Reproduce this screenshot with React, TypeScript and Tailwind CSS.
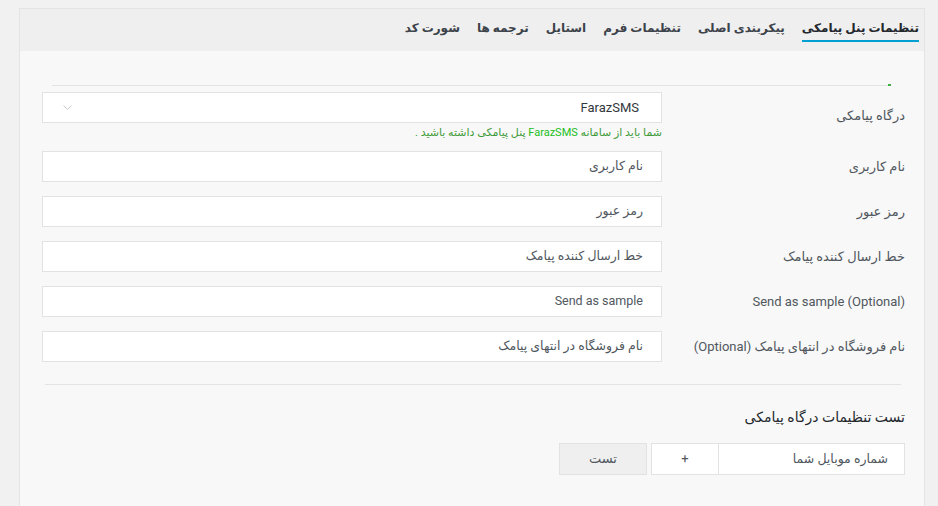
import React from "react";

const tabs = ["تنظیمات پنل پیامکی", "پیکربندی اصلی", "تنظیمات فرم", "استایل", "ترجمه ها", "شورت کد"];

const fields = [
  { label: "نام کاربری", value: "نام کاربری" },
  { label: "رمز عبور", value: "رمز عبور" },
  { label: "خط ارسال کننده پیامک", value: "خط ارسال کننده پیامک" },
  { label: "Send as sample (Optional)", value: "Send as sample" },
  { label: "نام فروشگاه در انتهای پیامک (Optional)", value: "نام فروشگاه در انتهای پیامک" },
];

const font = "font-['Roboto','DejaVu_Sans',sans-serif]";

export default function App() {
  return (
    <div dir="rtl" className={`min-h-[506px] bg-[#f1f1f1] pt-2 pl-[19px] pr-[13px] ${font}`}>
      <div className="min-h-[498px] border-l border-r border-t border-[#e4e4e4] bg-[#f8f8f8]">
        {/* tabs */}
        <nav className="flex h-[42px] items-start gap-[17px] bg-[#efefef] pr-[5px] pt-[13px]">
          {tabs.map((t, i) => (
            <div
              key={i}
              className={`pb-[6px] text-[12px] font-bold leading-[12px] ${
                i === 0 ? "border-b-2 border-[#00a0d2] text-[#23282d]" : "border-b-2 border-transparent text-[#3c434a]"
              }`}
            >
              {t}
            </div>
          ))}
        </nav>

        <div className="pl-[22px] pr-[19px] pt-[33px]">
          <div className="ml-[10px] mr-[14px] flex items-center">
            <span className="h-[2px] w-[3px] bg-[#3cb043]" />
            <div className="h-px flex-1 bg-[#e3e3e3]" />
          </div>

          {/* gateway select */}
          <div className="mt-[6px] flex items-center">
            <div className="w-[243px] shrink-0 text-[13px] text-[#50575e]">درگاه پیامکی</div>
            <div className="flex-1">
              <div className="flex h-[31px] items-center justify-between border border-[#e2e2e2] bg-white pl-[20px] pr-[22px] text-[13px] text-[#32373c]">
                <span>FarazSMS</span>
                <svg width="9" height="6" viewBox="0 0 9 6" fill="none" stroke="#c8c8c8" strokeWidth="1">
                  <path d="M0.5 0.5 L4.5 4.5 L8.5 0.5" />
                </svg>
              </div>
              <p className="mt-[3px] text-[11px] leading-[14px] text-[#3f9b3a]">
                شما باید از سامانه <span className="text-[#20c020]">FarazSMS</span> پنل پیامکی داشته باشید .
              </p>
            </div>
          </div>

          <div className="mt-[11px] flex flex-col gap-[14px]">
            {fields.map((f, i) => (
              <div key={i} className="flex items-center">
                <div className="w-[243px] shrink-0 text-[13px] text-[#50575e]">{f.label}</div>
                <div className="flex h-[31px] flex-1 items-center border border-[#e2e2e2] bg-white pr-[18px] text-[12.5px] text-[#50575e]">
                  {f.value}
                </div>
              </div>
            ))}
          </div>

          <div className="ml-[3px] mr-[4px] mt-[22px] h-px bg-[#e3e3e3]" />

          <h3 className="mt-[22px] text-[14px] font-normal text-[#23282d]">تست تنظیمات درگاه پیامکی</h3>

          <div className="mt-[15px] flex h-[32px] items-stretch">
            <div className="flex w-[187px] items-center border border-[#e2e2e2] bg-white pr-[16px] text-[12.5px] text-[#50575e]">
              شماره موبایل شما
            </div>
            <div className="flex w-[67px] items-center justify-center border border-r-0 border-[#e2e2e2] bg-white text-[13px] text-[#50575e]">
              +
            </div>
            <button className="mr-[4px] w-[88px] border border-[#e2e2e2] bg-[#efefef] text-[13px] text-[#50575e]">
              تست
            </button>
          </div>
        </div>
      </div>
    </div>
  );
}
